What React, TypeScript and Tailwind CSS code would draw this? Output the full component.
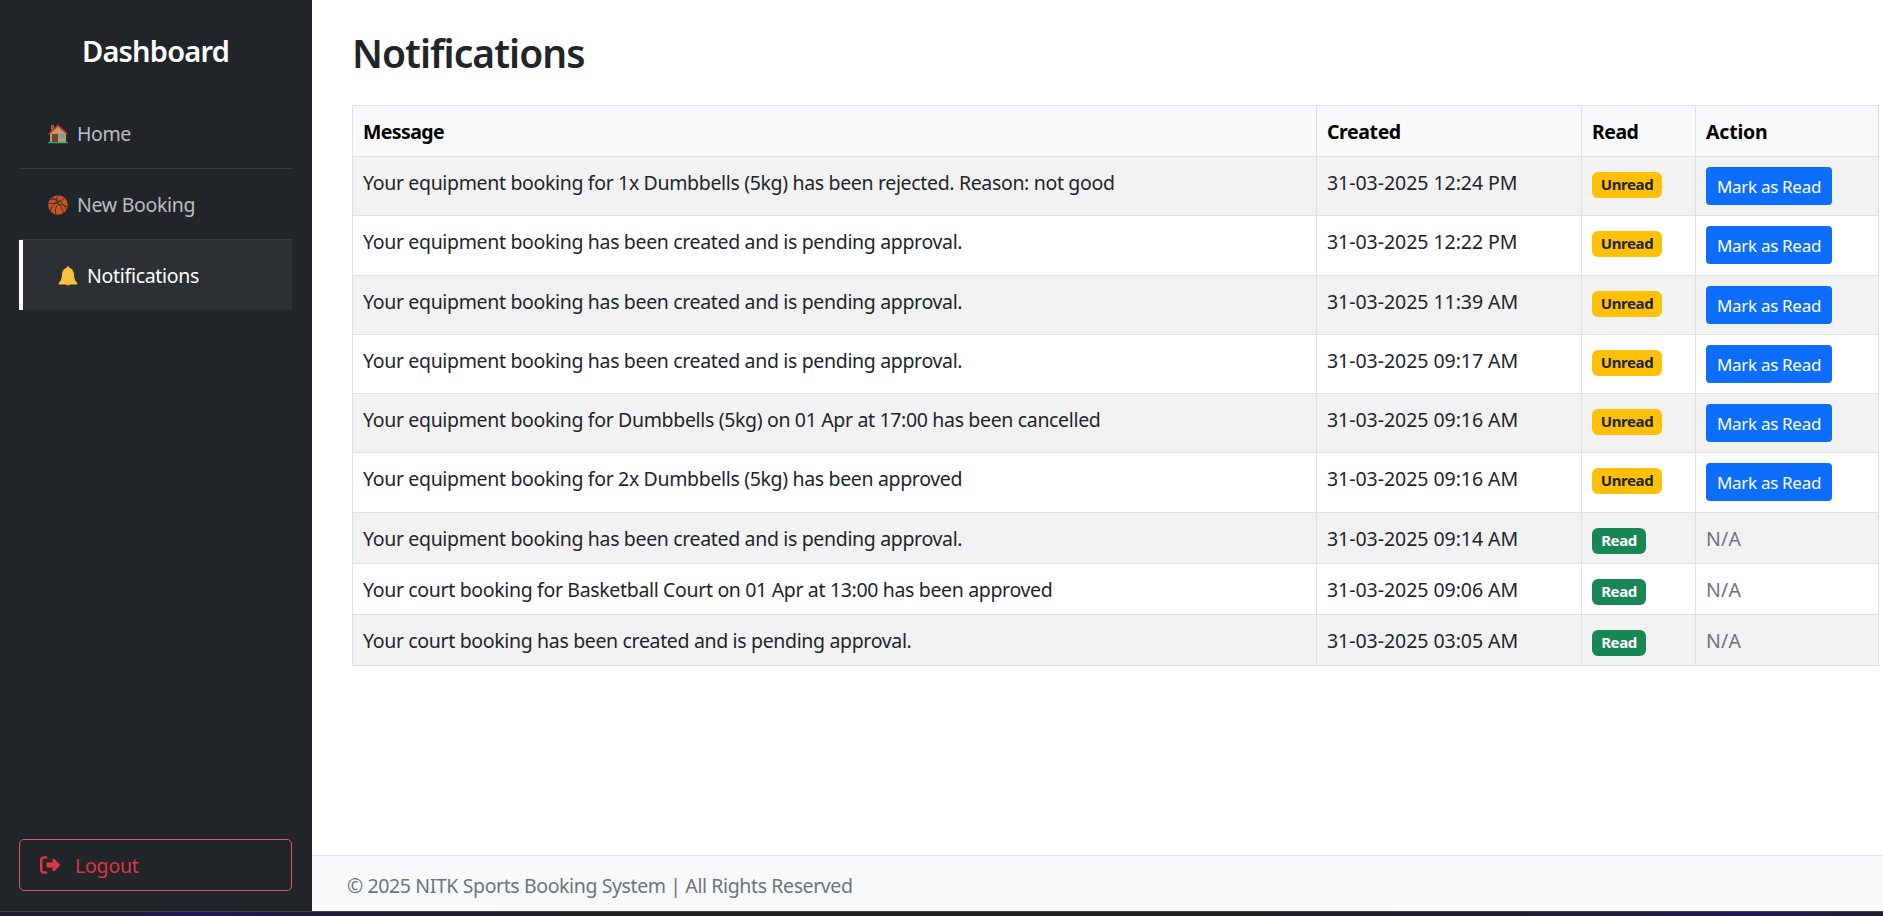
import React from "react";

type Row = { message: string; created: string; read: boolean; height: string };

const rows: Row[] = [
  { message: "Your equipment booking for 1x Dumbbells (5kg) has been rejected. Reason: not good", created: "31-03-2025 12:24 PM", read: false, height: "h-[59px]" },
  { message: "Your equipment booking has been created and is pending approval.", created: "31-03-2025 12:22 PM", read: false, height: "h-[60px]" },
  { message: "Your equipment booking has been created and is pending approval.", created: "31-03-2025 11:39 AM", read: false, height: "h-[59px]" },
  { message: "Your equipment booking has been created and is pending approval.", created: "31-03-2025 09:17 AM", read: false, height: "h-[59px]" },
  { message: "Your equipment booking for Dumbbells (5kg) on 01 Apr at 17:00 has been cancelled", created: "31-03-2025 09:16 AM", read: false, height: "h-[59px]" },
  { message: "Your equipment booking for 2x Dumbbells (5kg) has been approved", created: "31-03-2025 09:16 AM", read: false, height: "h-[60px]" },
  { message: "Your equipment booking has been created and is pending approval.", created: "31-03-2025 09:14 AM", read: true, height: "h-[51px]" },
  { message: "Your court booking for Basketball Court on 01 Apr at 13:00 has been approved", created: "31-03-2025 09:06 AM", read: true, height: "h-[51px]" },
  { message: "Your court booking has been created and is pending approval.", created: "31-03-2025 03:05 AM", read: true, height: "h-[51px]" },
];

function HouseIcon() {
  return (
    <svg width="20" height="20" viewBox="0 0 20 20">
      <rect x="3" y="1" width="3" height="7" fill="#8a6a4a" />
      <path d="M2 9 L10 2 L18 9 V18 H2 Z" fill="#c19a60" />
      <path d="M0.7 10 L10 1.4 L19.3 10" fill="none" stroke="#c9282d" strokeWidth="1.7" />
      <rect x="4" y="10" width="6" height="8" fill="#6d4534" />
      <rect x="11.500" y="10" width="4.500" height="4" fill="#5f9fd0" />
      <rect x="0" y="18" width="20" height="1.2" fill="#17b877" />
    </svg>
  );
}

function BasketballIcon() {
  return (
    <svg width="20" height="20" viewBox="0 0 20 20">
      <circle cx="10" cy="10" r="9.8" fill="#ca5422" />
      <g fill="none" stroke="#3a2923" strokeWidth="0.9">
        <path d="M4 2.300C9 5 14 12 15.500 18" />
        <path d="M0.500 8.500C6 9 13 7 16.500 3" />
        <path d="M10.500 0.300C8 3 8 5 9 7.500C10.500 10.500 15 10 19.600 11.500" />
        <path d="M1.500 5C5 3.500 9 4 12 6.500C15.500 9 18 12 18.300 15" />
        <path d="M2.800 16.500C3 11.500 5.500 8.500 10 7.500" />
        <path d="M8 19.500C6.500 15 8 11 11 8.500" />
      </g>
    </svg>
  );
}

function BellIcon() {
  return (
    <svg width="20" height="20" viewBox="0 0 20 20">
      <circle cx="10" cy="17.600" r="2.200" fill="#e0762b" />
      <path d="M10 0.200C11 0.200 11.300 1 11.300 1.800C14.600 2.700 15.900 5.200 16 8.500C16.100 12 16.600 14.200 19.200 17V18.600H0.800V17C3.400 14.200 3.900 12 4 8.500C4.100 5.200 5.400 2.700 8.700 1.800C8.700 1 9 0.200 10 0.200Z" fill="#f8c23c" />
    </svg>
  );
}

function LogoutIcon() {
  return (
    <svg width="20" height="20" viewBox="0 0 512 512" fill="#dc3545">
      <path d="M377.900 105.900L500.700 228.700c7.200 7.200 11.300 17.100 11.300 27.300s-4.100 20.100-11.300 27.300L377.900 406.100c-6.400 6.400-15 9.900-24 9.900c-18.700 0-33.900-15.200-33.900-33.900l0-62.100-128 0c-17.700 0-32-14.300-32-32l0-64c0-17.700 14.300-32 32-32l128 0 0-62.100c0-18.700 15.200-33.900 33.900-33.900c9 0 17.600 3.600 24 9.900zM160 96L96 96c-17.700 0-32 14.300-32 32l0 256c0 17.700 14.300 32 32 32l64 0c17.700 0 32 14.300 32 32s-14.300 32-32 32l-64 0c-53 0-96-43-96-96L0 128C0 75 43 32 96 32l64 0c17.700 0 32 14.300 32 32s-14.300 32-32 32z" />
    </svg>
  );
}

function Sidebar() {
  return (
    <aside className="flex w-[312px] shrink-0 flex-col bg-[#212529] pr-5 pb-[20px] pl-[19px]">
      <h2 className="mt-[30px] mb-[26px] text-center text-[29px] leading-[42px] font-semibold tracking-[-0.8px] text-white">
        Dashboard
      </h2>
      <nav className="flex flex-col text-[19.500px] tracking-[-0.4px] text-[#bcbebf]">
        <a className="flex h-[71px] items-center gap-[9px] border-b border-[#373a3e] pt-0.5 pl-[29px]">
          <HouseIcon />
          <span>Home</span>
        </a>
        <a className="flex h-[71px] items-center gap-[9px] border-b border-[#373b3e] pt-0.5 pl-[29px]">
          <BasketballIcon />
          <span className="tracking-[-0.3px]">New Booking</span>
        </a>
        <a className="flex h-[70px] items-center gap-[9px] border-l-4 border-white bg-[#2c3034] pt-0.5 pl-[35px] text-white">
          <BellIcon />
          <span className="tracking-[-0.3px]">Notifications</span>
        </a>
      </nav>
      <button className="mt-auto flex h-[52px] items-center gap-[15px] rounded-[5px] border border-[#d85a5f] pl-5 text-[19.500px] text-[#dc3545]">
        <LogoutIcon />
        <span className="pt-0.5 tracking-[-0.2px]">Logout</span>
      </button>
    </aside>
  );
}

function NotificationTable() {
  return (
    <table className="w-[1526px] table-fixed border-collapse text-left text-[19.500px] leading-[30px] [&_td]:border [&_td]:border-[#dee2e6] [&_td]:px-[10px] [&_td]:pt-[10px] [&_td]:pb-0 [&_td]:align-top [&_th]:border [&_th]:border-[#dee2e6] [&_th]:px-[10px] [&_th]:pt-0.5">
      <colgroup>
        <col className="w-[964px]" />
        <col className="w-[265px]" />
        <col className="w-[114px]" />
        <col className="w-[183px]" />
      </colgroup>
      <thead>
        <tr className="h-[51px] bg-[#f8f9fa] font-bold tracking-[-0.4px] text-black">
          <th className="tracking-[-0.6px]">Message</th>
          <th>Created</th>
          <th className="tracking-[-0.5px]">Read</th>
          <th className="tracking-[-0.2px]">Action</th>
        </tr>
      </thead>
      <tbody>
        {rows.map((row, i) => (
          <tr key={i} className={`${row.height} ${i % 2 === 0 ? "bg-[#f2f2f2]" : "bg-white"}`}>
            <td><span className="block pt-px whitespace-nowrap tracking-[-0.34px]">{row.message}</span></td>
            <td><span className="block pt-px whitespace-nowrap tracking-[-0.04px]">{row.created}</span></td>
            <td>
              {row.read ? (
                <span className="mt-[5px] flex h-[26px] w-[54px] items-center justify-center rounded-[6px] bg-[#198754] pb-0.5 text-[15px] font-bold tracking-[-0.4px] text-white">Read</span>
              ) : (
                <span className="mt-[5px] flex h-[26px] w-[70px] items-center justify-center rounded-[6px] bg-[#ffc107] pb-0.5 text-[15px] font-bold tracking-[-0.4px] text-[#212529]">Unread</span>
              )}
            </td>
            <td>
              {row.read ? (
                <span className="block pt-px tracking-[0.2px] text-[#6c757d]">N/A</span>
              ) : (
                <button className="flex h-[38px] w-[126px] items-center justify-center rounded-[4px] bg-[#0d6efd] pt-px text-[17px] tracking-[-0.3px] whitespace-nowrap text-white">Mark as Read</button>
              )}
            </td>
          </tr>
        ))}
      </tbody>
    </table>
  );
}

export default function App() {
  return (
    <div className="flex h-[916px] w-[1883px] flex-col overflow-hidden bg-white font-['Noto_Sans',sans-serif] text-[#212529]">
      <div className="flex h-[911px]">
        <Sidebar />
        <div className="flex min-w-0 grow flex-col">
          <main className="grow pt-[29px] pl-10">
            <h1 className="mb-[28px] text-[39px] leading-[48px] font-semibold tracking-[-0.95px]">Notifications</h1>
            <NotificationTable />
          </main>
          <footer className="flex h-[56px] items-center border-t border-[#dee2e6] bg-[#f8f9fa] pt-[4px] pl-[35px] text-[19.500px] tracking-[-0.39px] text-[#6c757d]">
            © 2025 NITK Sports Booking System | All Rights Reserved
          </footer>
        </div>
      </div>
      <div className="h-[5px] border-t border-[#45464c] bg-linear-[90deg,#211c2b_0%,#211c2b_5%,#24155a_10%,#211a38_18%,#221d25_30%,#201e22_65%,#201d38_85%,#24155a_93%,#201d30_100%]" />
    </div>
  );
}
